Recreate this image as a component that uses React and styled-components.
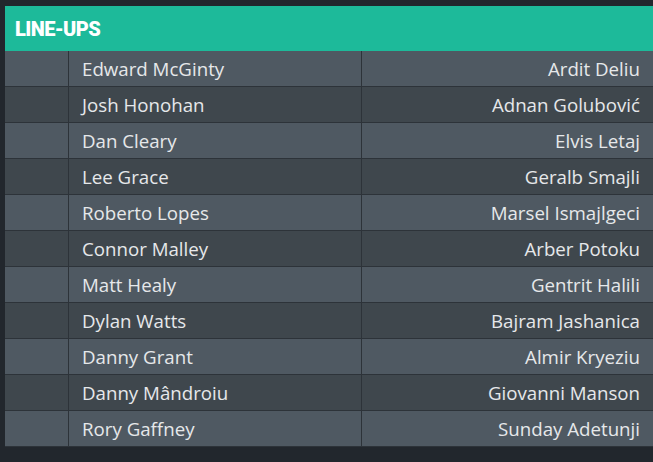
import React from "react"
import styled, { createGlobalStyle } from "styled-components"

const GlobalStyle = createGlobalStyle`
  html, body {
    margin: 0;
    padding: 0;
    background: #22272d;
  }

  body {
    font-family: "Open Sans", "Liberation Sans", sans-serif;
  }
`

const Page = styled.div`
  padding: 6px 0 0 5px;
  min-height: 100vh;
  box-sizing: border-box;
`

const Panel = styled.section`
  background: #2d3339;
  border-bottom: 1px solid #2d3339;
`

const Header = styled.h2`
  margin: 0;
  height: 45px;
  display: flex;
  align-items: center;
  padding: 0 10px;
  background: #1dba9a;
  color: #ffffff;
  font-family: "Roboto", sans-serif;
  font-weight: 900;
  font-size: 20px;
  letter-spacing: -0.6px;
`

const Table = styled.div`
  display: grid;
  grid-template-columns: 63px 292px 1fr;
  row-gap: 1px;
  column-gap: 1px;
`

const Cell = styled.div`
  height: 35px;
  display: flex;
  align-items: center;
  justify-content: ${props => (props.$right ? "flex-end" : "flex-start")};
  padding: ${props => (props.$right ? "0 13px 0 0" : "0 0 0 13px")};
  background: ${props => (props.$odd ? "#4f5962" : "#3f474d")};
  color: #e6e8ea;
  font-size: 18.7px;
  white-space: nowrap;
`

const lineups = [
  ["Edward McGinty", "Ardit Deliu"],
  ["Josh Honohan", "Adnan Golubović"],
  ["Dan Cleary", "Elvis Letaj"],
  ["Lee Grace", "Geralb Smajli"],
  ["Roberto Lopes", "Marsel Ismajlgeci"],
  ["Connor Malley", "Arber Potoku"],
  ["Matt Healy", "Gentrit Halili"],
  ["Dylan Watts", "Bajram Jashanica"],
  ["Danny Grant", "Almir Kryeziu"],
  ["Danny Mândroiu", "Giovanni Manson"],
  ["Rory Gaffney", "Sunday Adetunji"],
]

const App = () => {
  return (
    <Page>
      <GlobalStyle />
      <Panel>
        <Header>LINE-UPS</Header>
        <Table>
          {lineups.map(([home, away], i) => (
            <React.Fragment key={home}>
              <Cell $odd={i % 2 === 0} />
              <Cell $odd={i % 2 === 0}>{home}</Cell>
              <Cell $odd={i % 2 === 0} $right>
                {away}
              </Cell>
            </React.Fragment>
          ))}
        </Table>
      </Panel>
    </Page>
  )
}

export default App
